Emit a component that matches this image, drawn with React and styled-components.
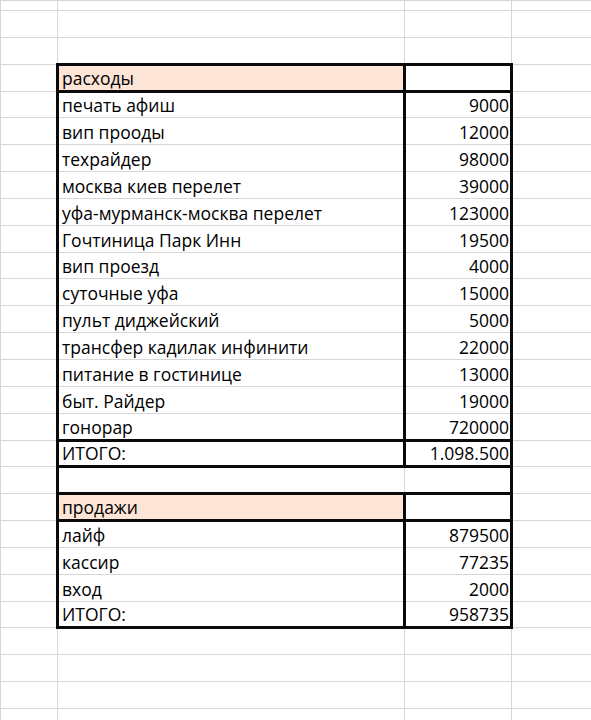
import React from 'react';
import styled, { createGlobalStyle } from 'styled-components';

const GlobalStyle = createGlobalStyle`
  html, body {
    margin: 0;
    padding: 0;
    background: #ffffff;
    overflow: hidden;
  }
`;

const GRID = '#d6d6d6';
const INK = '#0a0a0a';
const ROW_H = 26.85;

const Sheet = styled.table`
  border-collapse: collapse;
  table-layout: fixed;
  width: 591px;
  font-family: 'Open Sans', 'Liberation Sans', sans-serif;
  font-size: 17.5px;
  color: #000;
`;

const Row = styled.tr`
  height: ${(p) => p.$h}px;
`;

const border = (thick) => (thick ? `3px solid ${INK}` : `1px solid ${GRID}`);

const Cell = styled.td`
  padding: 0 4px 1px 3px;
  vertical-align: bottom;
  white-space: nowrap;
  overflow: hidden;
  line-height: 21px;
  text-align: ${(p) => (p.$num ? 'right' : 'left')};
  padding-right: ${(p) => (p.$num ? '1px' : '4px')};
  background: ${(p) => (p.$fill ? '#fce4d6' : 'transparent')};
  border-top: ${(p) => border(p.$t)};
  border-bottom: ${(p) => border(p.$b)};
  border-left: ${(p) => border(p.$l)};
  border-right: ${(p) => border(p.$r)};
`;

const costs = [
  ['печать афиш', '9000'],
  ['вип прооды', '12000'],
  ['техрайдер', '98000'],
  ['москва киев перелет', '39000'],
  ['уфа-мурманск-москва перелет', '123000'],
  ['Гочтиница Парк Инн', '19500'],
  ['вип проезд', '4000'],
  ['суточные уфа', '15000'],
  ['пульт диджейский', '5000'],
  ['трансфер кадилак инфинити', '22000'],
  ['питание в гостинице', '13000'],
  ['быт. Райдер', '19000'],
  ['гонорар', '720000'],
];

const sales = [
  ['лайф', '879500'],
  ['кассир', '77235'],
  ['вход', '2000'],
];

// each table row: label, value, and which sides carry the thick border
const tableRows = [
  { label: 'расходы', fill: true, box: true },
  ...costs.map(([label, value]) => ({ label, value })),
  { label: 'ИТОГО:', value: '1.098.500', box: true },
  { blank: true, topThick: true, bottomThick: true },
  { label: 'продажи', fill: true, box: true },
  ...sales.map(([label, value]) => ({ label, value })),
  { label: 'ИТОГО:', value: '958735', bottomThick: true },
];

const EmptyRow = ({ h = ROW_H }) => (
  <Row $h={h}>
    <Cell />
    <Cell />
    <Cell />
    <Cell />
  </Row>
);

const DataRow = ({ row }) => {
  const t = !!(row.box || row.topThick);
  const b = !!(row.box || row.bottomThick);
  return (
    <Row $h={ROW_H}>
      <Cell />
      <Cell $l $r={!row.blank} $t={t} $b={b} $fill={row.fill}>
        {row.label}
      </Cell>
      <Cell $num $l={!row.blank} $r $t={t} $b={b}>
        {row.value}
      </Cell>
      <Cell />
    </Row>
  );
};

export default function App() {
  return (
    <>
      <GlobalStyle />
      <Sheet>
        <colgroup>
          <col style={{ width: 57 }} />
          <col style={{ width: 347 }} />
          <col style={{ width: 107 }} />
          <col style={{ width: 80 }} />
        </colgroup>
        <tbody>
          <EmptyRow h={10} />
          <EmptyRow />
          <EmptyRow />
          {tableRows.map((row, i) => (
            <DataRow key={i} row={row} />
          ))}
          <EmptyRow />
          <EmptyRow />
          <EmptyRow />
          <EmptyRow />
        </tbody>
      </Sheet>
    </>
  );
}
